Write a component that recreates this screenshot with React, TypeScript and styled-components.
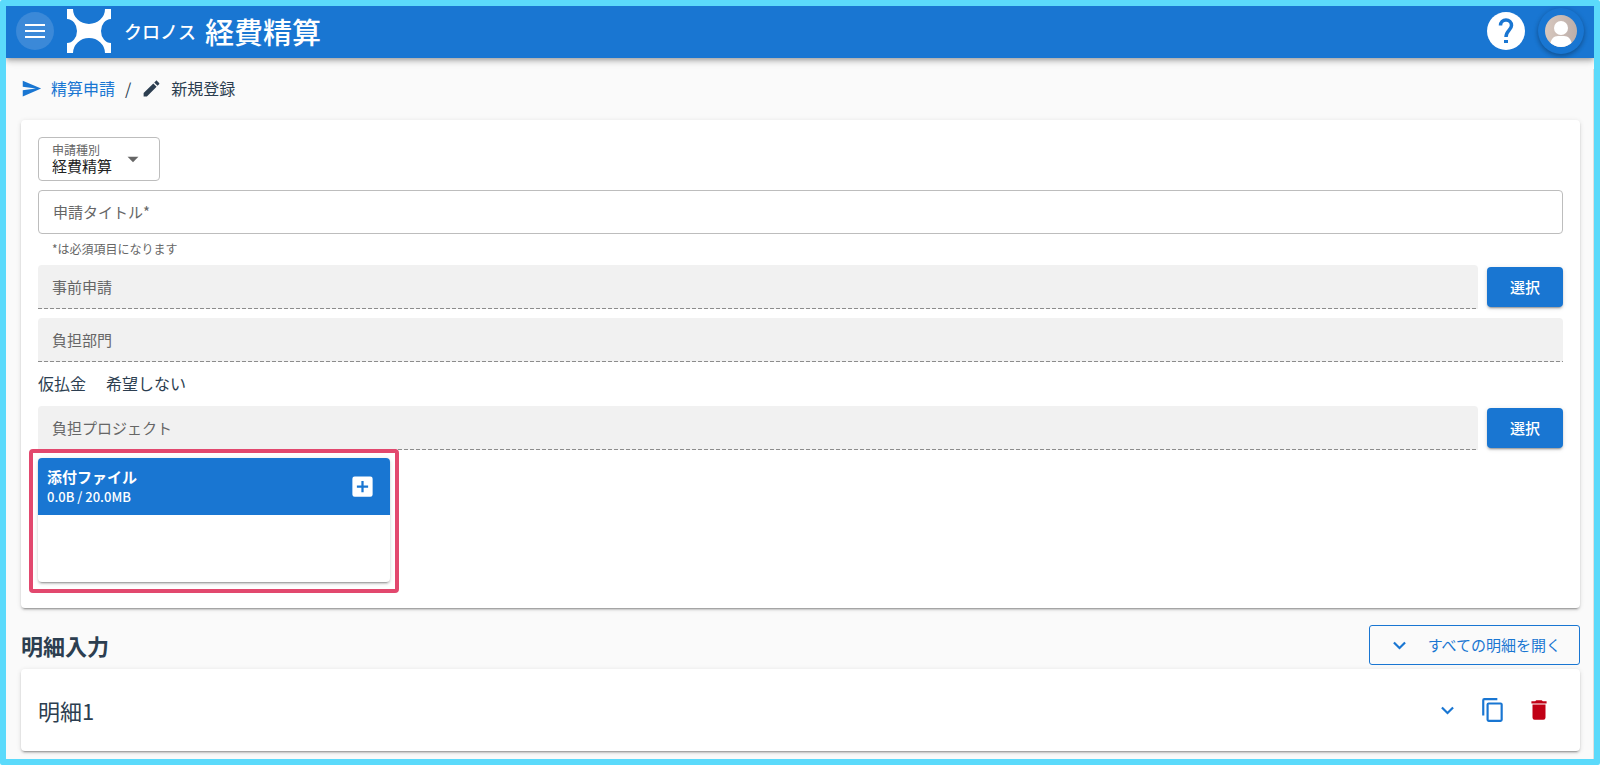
import React from "react";
import styled, { createGlobalStyle } from "styled-components";

const BLUE = "#1976d2";
const INK = "#2c3e50";

const GlobalStyle = createGlobalStyle`
  *, *::before, *::after { box-sizing: border-box; }
  body {
    margin: 0;
    background: #fff;
    color: ${INK};
    font-family: "Noto Sans CJK JP", "Noto Sans", sans-serif;
    font-size: 16px;
    line-height: 24px;
  }
  button, input, select { font: inherit; margin: 0; }
  button { cursor: pointer; }
  svg { display: block; flex: none; }
`;

const Frame = styled.div`
  border: 6px solid #5bdafb;
  border-radius: 2px;
  background: #fafafa;
`;

const HeaderArea = styled.div`
  overflow: hidden;
  padding-bottom: 11px;
`;

const Header = styled.header`
  display: flex;
  align-items: center;
  height: 52px;
  padding: 0 10px 2px;
  background: ${BLUE};
  color: #fff;
  box-shadow: 0 2px 4px -1px rgba(0, 0, 0, 0.2), 0 4px 5px rgba(0, 0, 0, 0.14),
    0 1px 10px rgba(0, 0, 0, 0.12);
`;

const RoundButton = styled.button<{ $size: number; $bg: string; $raised?: boolean }>`
  display: grid;
  place-items: center;
  width: ${(p) => p.$size}px;
  height: ${(p) => p.$size}px;
  padding: 0;
  border: 0;
  border-radius: 50%;
  background: ${(p) => p.$bg};
  color: inherit;
  box-shadow: ${(p) =>
    p.$raised ? "0 2px 4px rgba(0,0,0,.24), 0 1px 6px rgba(0,0,0,.12)" : "none"};
`;

const Brand = styled.h1`
  display: flex;
  align-items: center;
  flex: 1;
  margin: 0 0 0 13px;
  font-weight: 500;
`;

const BrandSmall = styled.span`
  margin: 0 9px 0 13px;
  font-size: 18px;
`;

const BrandLarge = styled.span`
  font-size: 29px;
  line-height: 40px;
`;

const HeaderActions = styled.div`
  display: flex;
  align-items: center;
  gap: 13px;
`;

const Content = styled.main`
  padding: 0 13px 8px 15px;
  border-right: 1px solid #e0e0e0;
`;

const Breadcrumb = styled.nav`
  display: flex;
  align-items: center;
  height: 38px;
  margin-bottom: 13px;
`;

const CrumbLink = styled.a`
  display: flex;
  align-items: center;
  gap: 9px;
  color: ${BLUE};
  text-decoration: none;
`;

const Slash = styled.span`
  margin: 0 10px;
`;

const Crumb = styled.span`
  display: flex;
  align-items: center;
  gap: 9px;
`;

const Card = styled.section`
  border-radius: 4px;
  background: #fff;
  box-shadow: 0 3px 1px -2px rgba(0, 0, 0, 0.2), 0 2px 2px rgba(0, 0, 0, 0.14),
    0 1px 5px rgba(0, 0, 0, 0.12);
`;

const FormCard = styled(Card)`
  padding: 17px 17px 26px;
`;

const FieldBox = styled.div<{ $filled?: boolean }>`
  display: grid;
  flex: 1;
  height: 44px;
  border: ${(p) => (p.$filled ? "0" : "1px solid #bdbdbd")};
  border-radius: ${(p) => (p.$filled ? "4px 4px 0 0" : "4px")};
  background: ${(p) =>
    p.$filled
      ? "repeating-linear-gradient(90deg, #8c8c8c 0 4px, transparent 4px 6px) bottom / 100% 1px no-repeat, #f1f1f1"
      : "#fff"};
  font-size: 15px;
`;

const FieldLabel = styled.label`
  grid-area: 1 / 1;
  align-self: center;
  padding: 0 14px;
  color: #666;
  z-index: 1;
  pointer-events: none;
`;

const FieldInput = styled.input`
  grid-area: 1 / 1;
  width: 100%;
  padding: 0 14px;
  border: 0;
  background: transparent;
  color: #222;
`;

const TypeBox = styled.div`
  display: grid;
  grid-template-columns: 1fr auto;
  width: 122px;
  height: 44px;
  margin-bottom: 9px;
  border: 1px solid #bdbdbd;
  border-radius: 4px;
`;

const TypeLabel = styled.label`
  grid-area: 1 / 1;
  align-self: start;
  padding: 4px 0 0 13px;
  color: #666;
  font-size: 12px;
  line-height: 16px;
`;

const TypeSelect = styled.select`
  grid-area: 1 / 1 / 2 / 3;
  width: 100%;
  padding: 14px 0 0 13px;
  border: 0;
  background: transparent;
  color: #222;
  font-size: 15px;
  appearance: none;
`;

const TypeArrow = styled.svg`
  grid-area: 1 / 2;
  align-self: center;
  margin-right: 13px;
  pointer-events: none;
`;

const Hint = styled.p`
  margin: 5px 0 6px;
  padding-left: 14px;
  color: #666;
  font-size: 12px;
  line-height: 20px;
`;

const FieldRow = styled.div`
  display: flex;
  align-items: center;
  gap: 9px;

  & + & {
    margin-top: 9px;
  }
`;

const SelectButton = styled.button`
  width: 76px;
  height: 40px;
  padding: 0;
  border: 0;
  border-radius: 4px;
  background: ${BLUE};
  color: #fff;
  font-size: 15px;
  font-weight: 500;
  box-shadow: 0 3px 1px -2px rgba(0, 0, 0, 0.2), 0 2px 2px rgba(0, 0, 0, 0.14),
    0 1px 5px rgba(0, 0, 0, 0.12);
`;

const Advance = styled.p`
  display: flex;
  gap: 20px;
  margin: 9px 0 11px;
`;

const AttachWrap = styled.div`
  position: relative;
  width: 352px;
  margin-top: 8px;

  &::after {
    content: "";
    position: absolute;
    inset: -9px -9px -11px;
    border: 4px solid #e2486e;
    border-radius: 4px;
    pointer-events: none;
  }
`;

const AttachCard = styled(Card)`
  overflow: hidden;
`;

const AttachHead = styled.div`
  display: flex;
  align-items: center;
  justify-content: space-between;
  height: 57px;
  padding: 0 14px 0 9px;
  background: ${BLUE};
  color: #fff;
`;

const AttachTitle = styled.h2`
  margin: 0;
  font-size: 15px;
  font-weight: 700;
  line-height: 20px;
`;

const AttachSize = styled.div`
  font-size: 13px;
  font-weight: 500;
  line-height: 20px;
`;

const AttachBody = styled.div`
  height: 67px;
`;

const IconButton = styled.button<{ $color: string }>`
  display: grid;
  place-items: center;
  padding: 0;
  border: 0;
  background: transparent;
  color: ${(p) => p.$color};
`;

const SectionHead = styled.div`
  display: flex;
  align-items: center;
  justify-content: space-between;
  margin: 17px 0 4px;
`;

const SectionTitle = styled.h2`
  margin: 0;
  font-size: 22px;
  font-weight: 700;
  line-height: 32px;
`;

const OpenAll = styled.button`
  display: flex;
  align-items: center;
  gap: 16px;
  height: 40px;
  padding: 0 18px 0 17px;
  border: 1px solid ${BLUE};
  border-radius: 3px;
  background: transparent;
  color: ${BLUE};
  font-size: 15px;
`;

const DetailCard = styled(Card)`
  display: flex;
  align-items: center;
  justify-content: space-between;
  height: 82px;
  padding: 0 28px 0 17px;
`;

const DetailTitle = styled.h3`
  margin: 0;
  font-size: 22px;
  font-weight: 400;
  line-height: 32px;
`;

const DetailActions = styled.div`
  display: flex;
  align-items: center;
  gap: 20px;
`;

const Icon = ({ d, size = 24 }: { d: string; size?: number }) => (
  <svg width={size} height={size} viewBox="0 0 24 24" fill="currentColor" aria-hidden="true">
    <path d={d} />
  </svg>
);

const MENU = "M2 5h20v2H2zM2 11h20v2H2zM2 17h20v2H2z";
const SEND = "M2 21l21-9L2 3v7l15 2-15 2z";
const PENCIL =
  "M20.71 7.04c.39-.39.39-1.04 0-1.41l-2.34-2.34c-.37-.39-1.02-.39-1.41 0l-1.84 1.83 3.75 3.75M3 17.25V21h3.75L17.81 9.93l-3.75-3.75L3 17.25z";
const CHEVRON = "M7.41 8.3 12 12.880l4.59-4.580L18.100 9.800 12 15.900 5.900 9.800z";
const COPY =
  "M19 21H8V7h11m0-2H8a2 2 0 0 0-2 2v14a2 2 0 0 0 2 2h11a2 2 0 0 0 2-2V7a2 2 0 0 0-2-2m-3-4H4a2 2 0 0 0-2 2v14h2V3h12V1z";
const TRASH = "M19 4h-3.5l-1-1h-5l-1 1H5v2h14M6 19a2 2 0 0 0 2 2h8a2 2 0 0 0 2-2V7H6v12z";
const PLUS_BOX =
  "M17 13h-4v4h-2v-4H7v-2h4V7h2v4h4m2-8H5a2 2 0 0 0-2 2v14a2 2 0 0 0 2 2h14a2 2 0 0 0 2-2V5a2 2 0 0 0-2-2z";

const Logo = () => (
  <svg width="44" height="44" viewBox="0 0 44 44" fill="#fff" aria-hidden="true">
    <path d="M0 0h6a16 15 0 0 0 32 0h6v10a10 12 0 0 0 0 24v10h-6a16 15 0 0 0-32 0H0V34a10 12 0 0 0 0-24z" />
  </svg>
);

const HelpMark = () => (
  <svg width="38" height="38" viewBox="0 0 38 38" fill="none" aria-hidden="true">
    <path
      d="M13.500 13.500a5.500 5.500 0 0 1 11 0c0 4.500-5.500 5-5.500 11.500"
      stroke={BLUE}
      strokeWidth="3.500"
    />
    <path d="M17 28h4v3h-4z" fill={BLUE} />
  </svg>
);

const Avatar = () => (
  <svg width="32" height="32" viewBox="0 0 32 32" aria-hidden="true">
    <defs>
      <linearGradient id="skin" x1="0" x2="1">
        <stop offset="0" stopColor="#d8c8be" />
        <stop offset="1" stopColor="#bcaeaa" />
      </linearGradient>
      <clipPath id="round">
        <circle cx="16" cy="16" r="16" />
      </clipPath>
    </defs>
    <g clipPath="url(#round)">
      <rect width="32" height="32" fill="url(#skin)" />
      <circle cx="16" cy="13" r="7" fill="#fff" />
      <path d="M5 32c0-8 4-11 8-11h6c4 0 8 3 8 11z" fill="#fff" />
    </g>
  </svg>
);

function Field({ id, label, disabled }: { id: string; label: string; disabled?: boolean }) {
  return (
    <FieldBox $filled={disabled}>
      <FieldLabel htmlFor={id}>{label}</FieldLabel>
      <FieldInput id={id} type="text" disabled={disabled} />
    </FieldBox>
  );
}

export default function App() {
  return (
    <>
      <GlobalStyle />
      <Frame>
        <HeaderArea>
          <Header>
            <RoundButton $size={38} $bg="#3b89d8" aria-label="メニュー">
              <Icon d={MENU} />
            </RoundButton>
            <Brand>
              <Logo />
              <BrandSmall>クロノス</BrandSmall>
              <BrandLarge>経費精算</BrandLarge>
            </Brand>
            <HeaderActions>
              <RoundButton $size={38} $bg="#fff" aria-label="ヘルプ">
                <HelpMark />
              </RoundButton>
              <RoundButton $size={46} $bg={BLUE} $raised aria-label="アカウント">
                <Avatar />
              </RoundButton>
            </HeaderActions>
          </Header>
        </HeaderArea>
        <Content>
          <Breadcrumb>
            <CrumbLink href="#requests">
              <Icon d={SEND} size={21} />
              精算申請
            </CrumbLink>
            <Slash>/</Slash>
            <Crumb>
              <Icon d={PENCIL} size={21} />
              新規登録
            </Crumb>
          </Breadcrumb>

          <FormCard>
            <TypeBox>
              <TypeLabel htmlFor="type">申請種別</TypeLabel>
              <TypeSelect id="type">
                <option>経費精算</option>
              </TypeSelect>
              <TypeArrow width="26" height="26" viewBox="0 0 24 24" fill="#666">
                <path d="M7 10l5 5 5-5z" />
              </TypeArrow>
            </TypeBox>
            <Field id="title" label="申請タイトル*" />
            <Hint>*は必須項目になります</Hint>
            <FieldRow>
              <Field id="prior" label="事前申請" disabled />
              <SelectButton>選択</SelectButton>
            </FieldRow>
            <FieldRow>
              <Field id="department" label="負担部門" disabled />
            </FieldRow>
            <Advance>
              <span>仮払金</span>
              <span>希望しない</span>
            </Advance>
            <FieldRow>
              <Field id="project" label="負担プロジェクト" disabled />
              <SelectButton>選択</SelectButton>
            </FieldRow>
            <AttachWrap>
              <AttachCard>
                <AttachHead>
                  <div>
                    <AttachTitle>添付ファイル</AttachTitle>
                    <AttachSize>0.0B / 20.0MB</AttachSize>
                  </div>
                  <IconButton $color="#fff" aria-label="ファイルを追加">
                    <Icon d={PLUS_BOX} size={27} />
                  </IconButton>
                </AttachHead>
                <AttachBody />
              </AttachCard>
            </AttachWrap>
          </FormCard>

          <SectionHead>
            <SectionTitle>明細入力</SectionTitle>
            <OpenAll>
              <Icon d={CHEVRON} size={25} />
              すべての明細を開く
            </OpenAll>
          </SectionHead>

          <DetailCard>
            <DetailTitle>明細1</DetailTitle>
            <DetailActions>
              <IconButton $color={BLUE} aria-label="開く">
                <Icon d={CHEVRON} size={25} />
              </IconButton>
              <IconButton $color={BLUE} aria-label="複製">
                <Icon d={COPY} size={26} />
              </IconButton>
              <IconButton $color="#c10015" aria-label="削除">
                <Icon d={TRASH} size={26} />
              </IconButton>
            </DetailActions>
          </DetailCard>
        </Content>
      </Frame>
    </>
  );
}
